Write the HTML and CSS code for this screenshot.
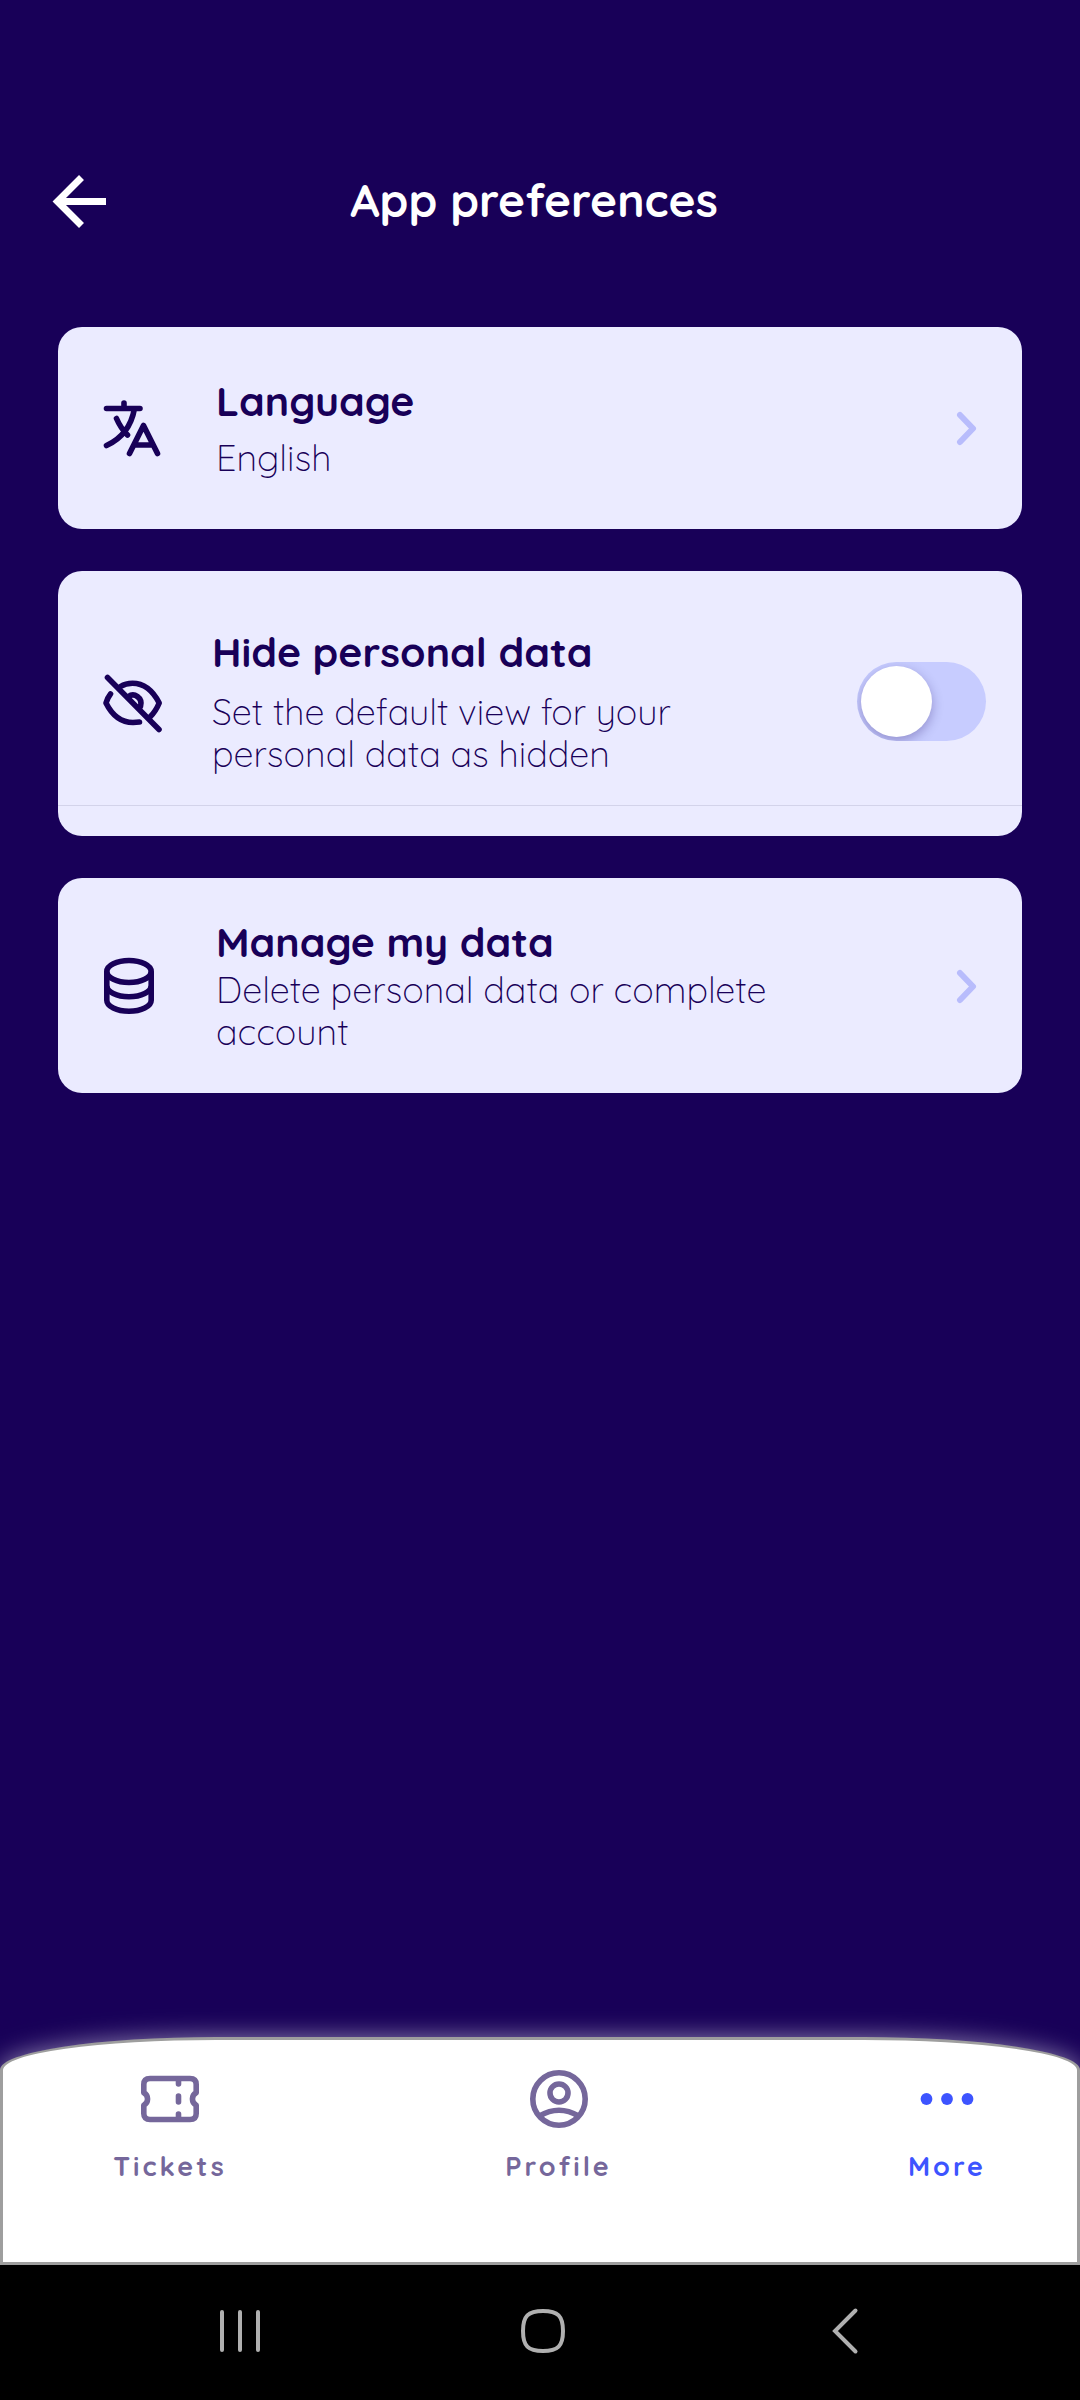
FILE: index.html
```html
<!DOCTYPE html>
<html lang="en">
<head>
  <meta charset="utf-8">
  <meta name="viewport" content="width=device-width, initial-scale=1">
  <title>App preferences</title>
  <link rel="stylesheet" href="styles.css">
</head>
<body>
  <header class="header">
    <button class="back-button" type="button" aria-label="Back">
      <svg width="80" height="80" viewBox="0 0 80 80" fill="none" stroke="currentColor" stroke-width="7">
        <path d="M66 41.5H19M41.500 17.500L17.500 41.500L41.500 65.500"/>
      </svg>
    </button>
    <h1>App preferences</h1>
  </header>

  <main class="cards">
    <a class="card" href="#language">
      <svg class="card-icon" width="68" height="68" viewBox="0 0 68 68" fill="none" stroke="currentColor" stroke-width="5.600" stroke-linecap="round" stroke-linejoin="round">
        <path d="M8.500 14.500H42M26 9V14.500M36.500 14.500C33.500 31 24 44.500 8.500 51.500M18.500 24.500C21.500 31.500 25 36.500 29.500 41M31.500 59.500L45.500 31.500L59.500 59.500M36.500 51H54.500"/>
      </svg>
      <span class="card-text spaced">
        <span class="card-title">Language</span>
        <span class="card-desc">English</span>
      </span>
      <svg class="chevron" width="36" height="36" viewBox="0 0 36 36" fill="none" stroke="currentColor" stroke-width="6" stroke-linecap="round" stroke-linejoin="round">
        <path d="M10 5L23 18.500L10 32"/>
      </svg>
    </a>

    <section class="card-group">
      <label class="toggle-row" for="hideData">
        <svg class="card-icon" width="68" height="68" viewBox="0 0 68 68" fill="none" stroke="currentColor" stroke-width="5.600" stroke-linecap="round" stroke-linejoin="round">
          <path d="M9.500 9.500L61 61.500"/>
          <path d="M22.500 18.500C26 16.300 30 15.300 34.500 15.300C46 15.300 54.500 22 61.200 35C58.600 41.200 56 45.200 52 49"/>
          <path d="M12.500 26C10.500 28.500 9 31.500 8 35C14.500 48 23.500 54.500 35 54.500L41.500 54"/>
          <path d="M30.500 28.500C36 24.500 45 29.500 42.500 38.500"/>
        </svg>
        <span class="card-text">
          <span class="card-title">Hide personal data</span>
          <span class="card-desc">Set the default view for your personal data as hidden</span>
        </span>
        <input class="toggle" type="checkbox" id="hideData">
      </label>
    </section>

    <a class="card" href="#manage">
      <svg class="card-icon" width="68" height="68" viewBox="0 0 68 68" fill="none" stroke="currentColor" stroke-width="5.600">
        <ellipse cx="31" cy="19.500" rx="22.200" ry="11"/>
        <path d="M8.800 19.500V48.200C8.800 54.300 18.700 59.200 31 59.200S53.200 54.300 53.200 48.200V19.500"/>
        <path d="M8.800 33.800C8.800 39.900 18.700 44.800 31 44.800S53.200 39.900 53.200 33.800"/>
      </svg>
      <span class="card-text">
        <span class="card-title">Manage my data</span>
        <span class="card-desc">Delete personal data or complete account</span>
      </span>
      <svg class="chevron" width="36" height="36" viewBox="0 0 36 36" fill="none" stroke="currentColor" stroke-width="6" stroke-linecap="round" stroke-linejoin="round">
        <path d="M10 5L23 18.500L10 32"/>
      </svg>
    </a>
  </main>

  <nav class="tab-bar">
    <a class="tab" href="#tickets">
      <svg width="64" height="64" viewBox="0 0 64 64" fill="none" stroke="currentColor" stroke-width="5.600" stroke-linecap="round" stroke-linejoin="round">
        <path d="M12 11.500H52Q58.200 11.500 58.200 17.500V25.800A7 7 0 0 0 58.200 38.200V46.500Q58.200 52.500 52 52.500H12Q5.800 52.500 5.800 46.500V38.200A7 7 0 0 0 5.800 25.800V17.500Q5.800 11.500 12 11.500Z"/>
        <path d="M40.500 12.500V17M40.500 29V35M40.500 47V51.500"/>
      </svg>
      <span>Tickets</span>
    </a>
    <a class="tab" href="#profile">
      <svg width="64" height="64" viewBox="0 0 64 64" fill="none" stroke="currentColor" stroke-width="5.600">
        <circle cx="32" cy="32" r="26.200"/>
        <circle cx="32" cy="26" r="9"/>
        <path d="M12.500 49Q32 37.500 51.500 49"/>
      </svg>
      <span>Profile</span>
    </a>
    <a class="tab active" href="#more">
      <svg width="64" height="64" viewBox="0 0 64 64" fill="currentColor">
        <circle cx="11.500" cy="32" r="5.900"/>
        <circle cx="32" cy="32" r="5.900"/>
        <circle cx="52.500" cy="32" r="5.900"/>
      </svg>
      <span>More</span>
    </a>
  </nav>

  <footer class="system-bar">
    <button type="button" aria-label="Recent apps">
      <svg width="60" height="60" viewBox="0 0 60 60" fill="none" stroke="currentColor" stroke-width="4" stroke-linecap="round">
        <path d="M12 11V49M30 11V49M48 11V49"/>
      </svg>
    </button>
    <button type="button" aria-label="Home">
      <svg width="60" height="60" viewBox="0 0 60 60" fill="none" stroke="currentColor" stroke-width="4">
        <path d="M30 10C45 10 50 15 50 30S45 50 30 50S10 45 10 30S15 10 30 10Z"/>
      </svg>
    </button>
    <button type="button" aria-label="Back">
      <svg width="60" height="60" viewBox="0 0 60 60" fill="none" stroke="currentColor" stroke-width="4" stroke-linecap="round">
        <path d="M40.500 9.500L20 30L40.500 50.500"/>
      </svg>
    </button>
  </footer>
</body>
</html>
```

FILE: styles.css
```css
* {
  box-sizing: border-box;
}
body {
  margin: 0;
  min-height: 100vh;
  display: flex;
  flex-direction: column;
  background: #180058;
  color: #180058;
  font-family: Quicksand, Inter, sans-serif;
}
svg {
  display: block;
}
button {
  padding: 0;
  border: none;
  background: none;
  cursor: pointer;
}
a {
  color: inherit;
  text-decoration: none;
}

.header {
  display: grid;
  grid-template-columns: 80px 1fr 80px;
  align-items: center;
  padding: 160px 52px 84px 40px;
  color: white;
}
.header h1 {
  margin: 0;
  font-size: 46px;
  line-height: 60px;
  font-weight: 700;
  text-align: center;
}
.back-button {
  color: white;
}

.cards {
  flex: 1;
  display: flex;
  flex-direction: column;
  gap: 42px;
  padding: 3px 58px 40px;
}
.card,
.card-group {
  background: #ebebff;
  border-radius: 24px;
}
.card {
  display: flex;
  align-items: center;
  gap: 50px;
  min-height: 202px;
  padding: 40px 36px 40px 40px;
}
.card-group {
  padding-bottom: 30px;
}
.toggle-row {
  display: flex;
  align-items: center;
  gap: 46px;
  padding: 57px 36px 30px 40px;
  border-bottom: 1px solid #d3d3ea;
  cursor: pointer;
}
.card-icon,
.chevron {
  flex: none;
}
.card-text {
  display: flex;
  flex-direction: column;
  gap: 3px;
  max-width: 600px;
}
.card-text.spaced {
  gap: 12px;
}
.toggle-row .card-text {
  gap: 15px;
}
.card-title {
  font-size: 41px;
  line-height: 48px;
  font-weight: 700;
}
.card-desc {
  font-size: 36px;
  line-height: 42px;
  font-weight: 300;
}
.chevron {
  margin-left: auto;
  color: #b8bcfc;
}

.toggle {
  appearance: none;
  flex: none;
  width: 129px;
  height: 79px;
  margin: 0 0 0 auto;
  padding: 4px;
  border-radius: 40px;
  background: #c7ccff;
  overflow: hidden;
  cursor: pointer;
}
.toggle::before {
  content: "";
  display: block;
  width: 71px;
  height: 71px;
  border-radius: 50%;
  background: white;
  box-shadow: 0 4px 12px rgba(24, 0, 88, 0.3);
}
.toggle:checked::before {
  margin-left: auto;
}

.tab-bar {
  display: flex;
  justify-content: space-between;
  padding: 27px 30px 79px 67px;
  border: 3px solid #9e9e9e;
  border-radius: 216px 216px 0 0 / 33px 33px 0 0;
  background: white;
  box-shadow: 0 0 24px rgba(255, 255, 255, 0.5);
}
.tab {
  display: flex;
  flex-direction: column;
  align-items: center;
  gap: 18px;
  width: 200px;
  color: #75679b;
  font-size: 27px;
  line-height: 34px;
  font-weight: 700;
  letter-spacing: 3px;
}
.tab.active {
  color: #3d54ff;
}

.system-bar {
  display: flex;
  justify-content: space-between;
  align-items: center;
  height: 135px;
  padding: 0 205px 3px 210px;
  background: black;
}
.system-bar button {
  color: #b0b0b0;
}
```
